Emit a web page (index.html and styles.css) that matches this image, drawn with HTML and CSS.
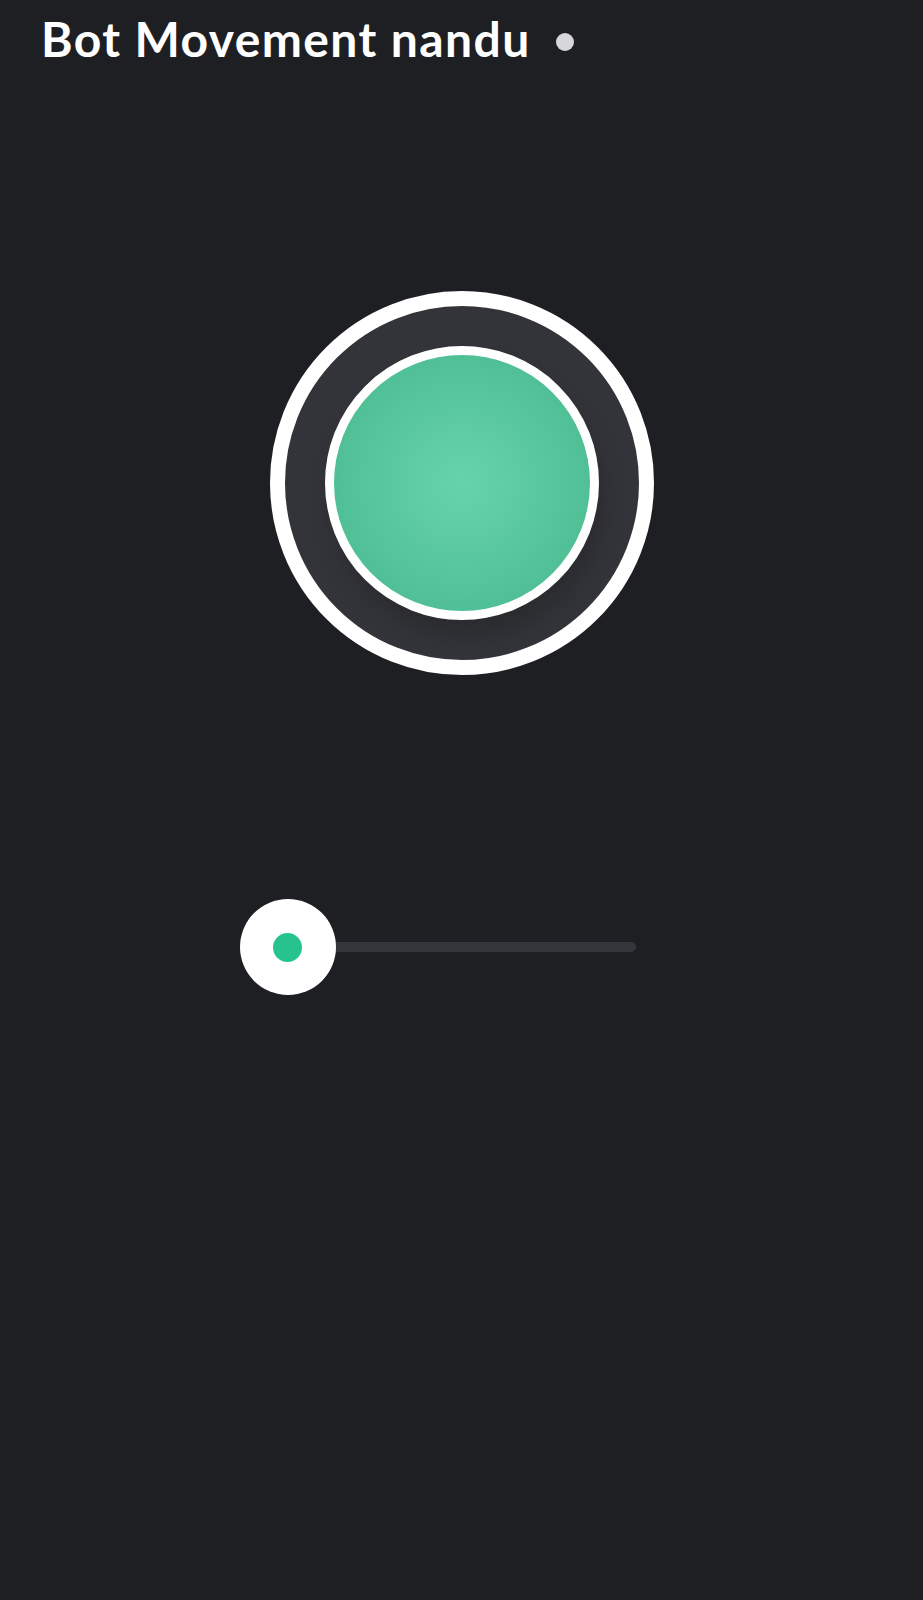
FILE: index.html
```html
<!DOCTYPE html>
<html lang="en">
<head>
<meta charset="utf-8">
<title>Bot Movement nandu</title>
<link rel="stylesheet" href="styles.css">
</head>
<body>
<header class="topbar">
  <h1 class="title">Bot Movement nandu</h1>
  <span class="status-dot"></span>
</header>
<main class="controls">
  <div class="joystick">
    <div class="joystick-knob"></div>
  </div>
  <div class="slider">
    <div class="slider-track"></div>
    <div class="slider-thumb"><span class="slider-thumb-dot"></span></div>
  </div>
</main>
</body>
</html>
```

FILE: styles.css
```css
html, body {
  margin: 0;
  padding: 0;
  background: #1e1f23;
  height: 100%;
}
body {
  font-family: "Lato", "Noto Sans", sans-serif;
  color: #ffffff;
}
.topbar {
  display: flex;
  align-items: center;
  padding: 15px 0 0 41px;
}
.title {
  margin: 0;
  font-size: 48px;
  line-height: 48px;
  font-weight: 700;
  letter-spacing: 1.4px;
}
.status-dot {
  width: 18px;
  height: 18px;
  border-radius: 50%;
  background: #d7d7d9;
  margin-left: 25px;
  margin-top: 6px;
}
.controls {
  display: flex;
  flex-direction: column;
  align-items: center;
}
.joystick {
  margin-top: 228px;
  width: 384px;
  height: 384px;
  box-sizing: border-box;
  border-radius: 50%;
  border: 15px solid #ffffff;
  background: #333439;
  display: flex;
  align-items: center;
  justify-content: center;
}
.joystick-knob {
  width: 274px;
  height: 274px;
  box-sizing: border-box;
  border-radius: 50%;
  border: 9px solid #ffffff;
  background: radial-gradient(circle at 50% 50%, #68d3ab 0%, #56c59c 55%, #45b589 100%);
  box-shadow: 6px 18px 22px rgba(0, 0, 0, 0.16);
}
.slider {
  margin-top: 224px;
  width: 348px;
  height: 96px;
  display: flex;
  align-items: center;
  position: relative;
}
.slider-track {
  flex: 1;
  height: 10px;
  border-radius: 5px;
  background: #35363b;
}
.slider-thumb {
  position: absolute;
  left: -48px;
  top: 0;
  width: 96px;
  height: 96px;
  border-radius: 50%;
  background: #ffffff;
  display: flex;
  align-items: center;
  justify-content: center;
}
.slider-thumb-dot {
  width: 29px;
  height: 29px;
  border-radius: 50%;
  background: #27c38e;
}
```
